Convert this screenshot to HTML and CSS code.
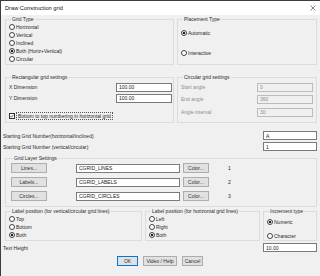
FILE: index.html
```html
<!DOCTYPE html>
<html lang="en">
<head>
  <meta charset="UTF-8">
  <meta name="viewport" content="width=device-width, initial-scale=1.0">
  <title>Draw Construction grid</title>
  <link rel="stylesheet" href="styles.css">
</head>
<body>
  <div class="window">
    <div class="titlebar">
      <span class="title">Draw Construction grid</span>
      <svg class="close" width="6" height="6" viewBox="0 0 6 6"><path d="M0.5 0.5 L5.5 5.5 M5.5 0.5 L0.5 5.5" stroke="#666" stroke-width="0.8"/></svg>
    </div>

    <div class="content">
      <!-- grid type / placement -->
      <div class="pair top-pair">
        <fieldset class="group grid-type">
          <legend>Grid Type</legend>
          <label class="opt"><span class="radio"></span>Horizontal</label>
          <label class="opt"><span class="radio"></span>Vertical</label>
          <label class="opt"><span class="radio"></span>Inclined</label>
          <label class="opt"><span class="radio checked"></span>Both (Horiz+Vertical)</label>
          <label class="opt"><span class="radio"></span>Circular</label>
        </fieldset>
        <fieldset class="group placement">
          <legend>Placement Type</legend>
          <label class="opt"><span class="radio checked"></span>Automatic</label>
          <label class="opt"><span class="radio"></span>Interactive</label>
        </fieldset>
      </div>

      <!-- grid settings -->
      <div class="pair settings-pair">
        <fieldset class="group rect">
          <legend>Rectangular grid settings</legend>
          <div class="field-row">
            <span>X Dimension</span>
            <input class="textbox" type="text" value="100.00">
          </div>
          <div class="field-row">
            <span>Y Dimension</span>
            <input class="textbox" type="text" value="100.00">
          </div>
          <label class="check-row">
            <span class="check"><svg width="4" height="4" viewBox="0 0 4 4"><path d="M0.4 2 L1.5 3.2 L3.6 0.7" fill="none" stroke="#222" stroke-width="0.7"/></svg></span>
            <span class="focus">Bottom to top numbering in horizontal grid</span>
          </label>
        </fieldset>
        <fieldset class="group circ">
          <legend>Circular grid settings</legend>
          <div class="field-row disabled">
            <span>Start angle</span>
            <input class="textbox" type="text" value="0" disabled>
          </div>
          <div class="field-row disabled">
            <span>End angle</span>
            <input class="textbox" type="text" value="360" disabled>
          </div>
          <div class="field-row disabled">
            <span>Angle interval</span>
            <input class="textbox" type="text" value="30" disabled>
          </div>
        </fieldset>
      </div>

      <!-- starting numbers -->
      <div class="line-row first-start">
        <span>Starting Grid Number(horizontal/inclined)</span>
        <input class="textbox short" type="text" value="A">
      </div>
      <div class="line-row second-start">
        <span>Starting Grid Number (vertical/circular)</span>
        <input class="textbox short" type="text" value="1">
      </div>

      <!-- layers -->
      <fieldset class="group layers">
        <legend>Grid Layer Settings</legend>
        <div class="layer-row">
          <button class="btn layer-btn">Lines...</button>
          <input class="textbox layer-name" type="text" value="CGRID_LINES">
          <button class="btn color-btn">Color...</button>
          <span class="layer-num">1</span>
        </div>
        <div class="layer-row">
          <button class="btn layer-btn">Labels...</button>
          <input class="textbox layer-name" type="text" value="CGRID_LABELS">
          <button class="btn color-btn">Color...</button>
          <span class="layer-num">2</span>
        </div>
        <div class="layer-row">
          <button class="btn layer-btn">Circles...</button>
          <input class="textbox layer-name" type="text" value="CGRID_CIRCLES">
          <button class="btn color-btn">Color...</button>
          <span class="layer-num">3</span>
        </div>
      </fieldset>

      <!-- label positions -->
      <div class="triple">
        <fieldset class="group label-pos">
          <legend>Label position (for vertical/circular grid lines)</legend>
          <label class="opt"><span class="radio"></span>Top</label>
          <label class="opt"><span class="radio"></span>Bottom</label>
          <label class="opt"><span class="radio checked"></span>Both</label>
        </fieldset>
        <fieldset class="group label-pos">
          <legend>Label position (for horizontal grid lines)</legend>
          <label class="opt"><span class="radio"></span>Left</label>
          <label class="opt"><span class="radio"></span>Right</label>
          <label class="opt"><span class="radio checked"></span>Both</label>
        </fieldset>
        <fieldset class="group increment">
          <legend>Increment type</legend>
          <label class="opt"><span class="radio checked"></span>Numeric</label>
          <label class="opt"><span class="radio"></span>Character</label>
        </fieldset>
      </div>

      <div class="line-row text-height">
        <span>Text Height</span>
        <input class="textbox short" type="text" value="10.00">
      </div>

      <div class="actions">
        <button class="btn ok">OK</button>
        <button class="btn help">Video / Help</button>
        <button class="btn cancel">Cancel</button>
      </div>
    </div>
  </div>
</body>
</html>
```

FILE: styles.css
```css
body {
  margin: 0;
  background-color: #f0f0f0;
  font-family: "Liberation Sans", Arial, sans-serif;
  font-size: 5px;
  color: #2a2a2a;
}

.window {
  border-top: 1px solid #3c3c3c;
  border-left: 1px solid #3c3c3c;
  height: 275px;
}

.titlebar {
  height: 14px;
  background-color: #fff;
  display: flex;
  align-items: center;
  justify-content: space-between;
  padding: 0 4px 0 4px;
  font-size: 5.7px;
  color: #111;
}

.close {
  display: block;
}

.content {
  padding: 0 3px 0 2px;
}

/* group boxes */
.group {
  margin: 0;
  border: 1px solid #dcdcdc;
  padding: 0 3px;
  min-width: 0;
}

.group legend {
  padding: 0 1px;
  margin-left: 2px;
  line-height: 6px;
  white-space: nowrap;
}

.pair {
  display: grid;
  grid-template-columns: 169px 1fr;
  column-gap: 3px;
  margin-left: 2px;
}

.top-pair {
  margin-top: 1px;
}

.settings-pair {
  margin-top: 9px;
}

/* radios & checkbox */
.opt {
  display: flex;
  align-items: center;
  height: 8px;
}

.radio {
  width: 6px;
  height: 6px;
  box-sizing: border-box;
  border: 1px solid #444;
  border-radius: 50%;
  background-color: #fff;
  margin-right: 1px;
  flex: none;
}

.radio.checked {
  background: radial-gradient(circle, #222 0 1.4px, #fff 1.6px);
}

.grid-type {
  padding-top: 1px;
  padding-bottom: 1px;
}

.placement {
  display: flex;
  flex-direction: column;
  gap: 12px;
  padding-top: 7px;
}

/* text boxes */
.textbox {
  box-sizing: border-box;
  height: 9px;
  width: 56px;
  border: 1px solid #7a7a7a;
  background-color: #fff;
  font-family: inherit;
  font-size: 5px;
  color: #222;
  padding: 0 2px;
  margin: 0;
  outline: none;
}

.textbox.short {
  width: 54px;
}

.field-row {
  display: flex;
  align-items: center;
  justify-content: space-between;
  height: 10px;
}

.rect {
  padding: 2px 1px 1px 3px;
}

.rect .field-row + .field-row {
  margin-top: 1px;
}

.check-row {
  display: flex;
  align-items: center;
  height: 10px;
  margin-top: 8px;
}

.check {
  width: 6px;
  height: 6px;
  box-sizing: border-box;
  border: 1px solid #333;
  background-color: #fff;
  display: flex;
  align-items: center;
  justify-content: center;
  flex: none;
}

.check svg {
  display: block;
}

.focus {
  border: 1px dotted #555;
  padding: 0 1px;
  line-height: 6px;
  margin-left: 1px;
}

.circ {
  padding: 2px 3px 0 3px;
}

.circ .field-row + .field-row {
  margin-top: 2px;
}

.circ .field-row:last-child {
  margin-top: 3px;
}

.disabled {
  color: #8d8d8d;
}

.disabled .textbox {
  background-color: #f0f0f0;
  border-color: #bcbcbc;
  color: #8d8d8d;
}

/* single lines */
.line-row {
  display: flex;
  align-items: center;
  justify-content: space-between;
  height: 9px;
}

.first-start {
  margin-top: 8px;
}

.second-start {
  margin-top: 2px;
}

/* layer settings */
.layers {
  margin: 4px 0 0 2px;
  padding: 2px 3px 5px 5px;
}

.layer-row {
  display: flex;
  align-items: center;
  height: 10px;
}

.layer-row + .layer-row {
  margin-top: 4px;
}

.btn {
  box-sizing: border-box;
  height: 10px;
  padding: 0;
  border: 1px solid #adadad;
  background-color: #e1e1e1;
  font-family: inherit;
  font-size: 5px;
  color: #333;
}

.layer-btn {
  width: 36px;
}

.layer-name {
  width: 104px;
  margin-left: 29px;
}

.color-btn {
  width: 26px;
  margin-left: 3px;
}

.layer-num {
  margin-left: 19px;
}

/* label positions */
.triple {
  display: grid;
  grid-template-columns: 137px 115px 1fr;
  column-gap: 3px;
  margin: 1px 0 0 2px;
}

.label-pos {
  padding-top: 1px;
  padding-bottom: 1px;
}

.increment {
  display: flex;
  flex-direction: column;
  gap: 6px;
  padding-top: 4px;
}

.text-height {
  margin-top: 2px;
}

.actions {
  display: flex;
  justify-content: center;
  gap: 5px;
  margin-top: 4px;
}

.ok {
  width: 21px;
  border-color: #0078d7;
}

.help {
  width: 34px;
}

.cancel {
  width: 21px;
}
```
